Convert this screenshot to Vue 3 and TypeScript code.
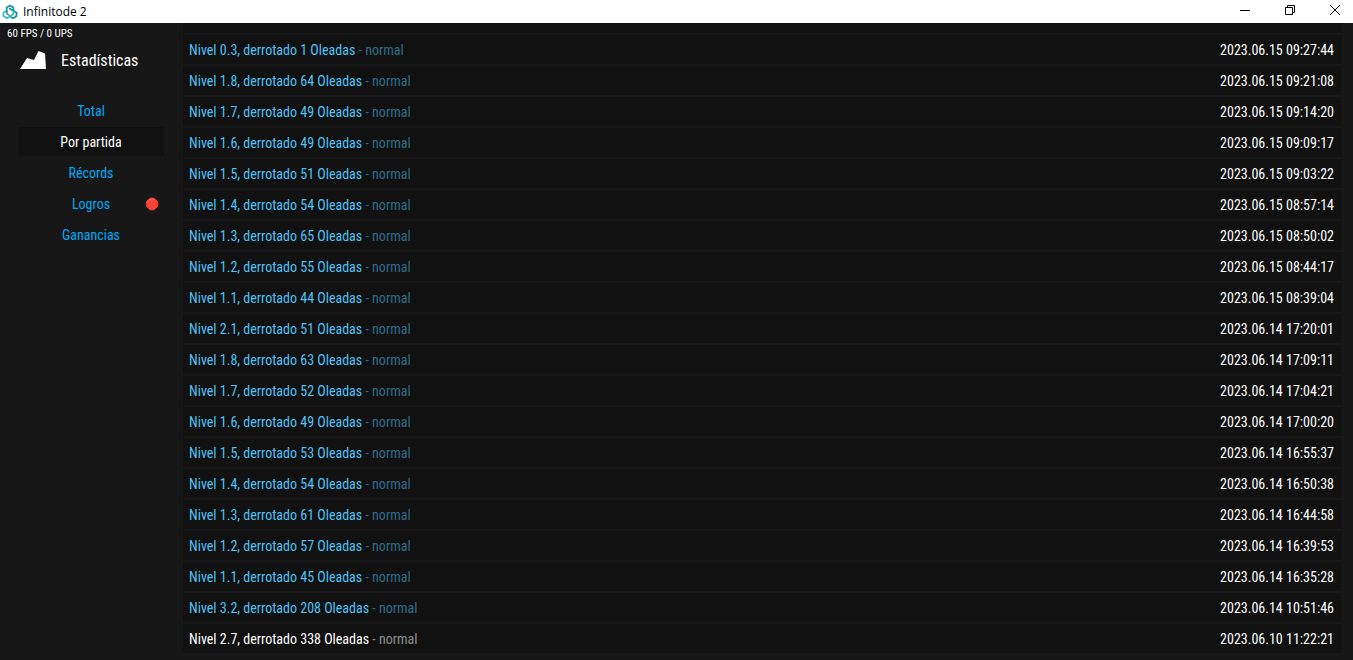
<script setup lang="ts">
interface Match {
  level: string
  waves: number
  date: string
  best?: boolean
}

const sections = [
  { name: 'Total' },
  { name: 'Por partida', active: true },
  { name: 'Récords' },
  { name: 'Logros', alert: true },
  { name: 'Ganancias' },
]

const matches: Match[] = [
  { level: '0.3', waves: 1, date: '2023.06.15 09:27:44' },
  { level: '1.8', waves: 64, date: '2023.06.15 09:21:08' },
  { level: '1.7', waves: 49, date: '2023.06.15 09:14:20' },
  { level: '1.6', waves: 49, date: '2023.06.15 09:09:17' },
  { level: '1.5', waves: 51, date: '2023.06.15 09:03:22' },
  { level: '1.4', waves: 54, date: '2023.06.15 08:57:14' },
  { level: '1.3', waves: 65, date: '2023.06.15 08:50:02' },
  { level: '1.2', waves: 55, date: '2023.06.15 08:44:17' },
  { level: '1.1', waves: 44, date: '2023.06.15 08:39:04' },
  { level: '2.1', waves: 51, date: '2023.06.14 17:20:01' },
  { level: '1.8', waves: 63, date: '2023.06.14 17:09:11' },
  { level: '1.7', waves: 52, date: '2023.06.14 17:04:21' },
  { level: '1.6', waves: 49, date: '2023.06.14 17:00:20' },
  { level: '1.5', waves: 53, date: '2023.06.14 16:55:37' },
  { level: '1.4', waves: 54, date: '2023.06.14 16:50:38' },
  { level: '1.3', waves: 61, date: '2023.06.14 16:44:58' },
  { level: '1.2', waves: 57, date: '2023.06.14 16:39:53' },
  { level: '1.1', waves: 45, date: '2023.06.14 16:35:28' },
  { level: '3.2', waves: 208, date: '2023.06.14 10:51:46' },
  { level: '2.7', waves: 338, date: '2023.06.10 11:22:21', best: true },
]
</script>

<template>
  <div class="window">
    <header class="titlebar">
      <svg class="logo" width="16" height="16" viewBox="0 0 16 16" fill="none" stroke-linecap="round" stroke-linejoin="round" aria-hidden="true">
        <path d="M4.800 7.500 L4.600 3.600 L8 1.500 L11.300 3.400 L11.500 6" stroke="#239cae" stroke-width="1.800" />
        <path d="M7.500 4.500 L11.500 6.800 L14.600 8.800 L14.400 12.200 L11 14.200 L8.800 13" stroke="#1a8ea3" stroke-width="1.800" />
        <path d="M3.800 7.200 L1.600 8.600 L1.400 12 L5 14.200 L8.200 12.300 L11.200 10.300 L11.200 8.500" stroke="#36bdca" stroke-width="1.800" />
        <path d="M4.800 7 L5 10 L7.200 11.300" stroke="#1d7287" stroke-width="1.200" />
      </svg>
      <span class="caption">Infinitode 2</span>
      <div class="controls">
        <button type="button" aria-label="Minimizar">
          <svg width="12" height="12" viewBox="0 0 12 12"><path d="M1 6.5H11" stroke="#000" fill="none" /></svg>
        </button>
        <button type="button" aria-label="Restaurar">
          <svg width="12" height="12" viewBox="0 0 12 12"><path d="M1.5 3.5H8.5V10.5H1.5ZM3.5 3.5V1.5H10.5V8.5H8.5" stroke="#000" fill="none" /></svg>
        </button>
        <button type="button" aria-label="Cerrar">
          <svg width="12" height="12" viewBox="0 0 12 12"><path d="M1 1L11 11M11 1L1 11" stroke="#000" fill="none" /></svg>
        </button>
      </div>
    </header>

    <div class="body">
      <aside class="sidebar">
        <div class="fps">60 FPS / 0 UPS</div>
        <div class="heading">
          <svg width="26" height="18" viewBox="0 0 26 18" aria-hidden="true">
            <path d="M0 18 L7 7 L14 9 L18.500 0 L25 2.500 L26 18 Z" fill="#fff" />
          </svg>
          <h1>Estadísticas</h1>
        </div>
        <nav>
          <button v-for="s in sections" :key="s.name" type="button" :class="{ active: s.active }">
            {{ s.name }}
            <svg v-if="s.alert" class="alert" width="14" height="14" viewBox="0 0 14 14" aria-hidden="true">
              <path d="M4.500 1.500 L7 1 L9.500 1.500 L12.500 4.500 L13 7 L12.500 9.500 L9.500 12.500 L7 13 L4.500 12.500 L1.500 9.500 L1 7 L1.500 4.500Z" fill="#f44336" stroke="#dc3c31" />
              <path d="M2 6 L5 2.500 L9 2" fill="none" stroke="#ff6659" />
            </svg>
          </button>
        </nav>
      </aside>

      <main>
        <ul>
          <li aria-hidden="true"></li>
          <li v-for="m in matches" :key="m.date" :class="{ best: m.best }">
            <span class="result">Nivel {{ m.level }}, derrotado {{ m.waves }} Oleadas <span class="mode">- normal</span></span>
            <time>{{ m.date }}</time>
          </li>
        </ul>
      </main>
    </div>
  </div>
</template>

<style>
body {
  margin: 0;
  background: #171717;
}
</style>

<style scoped>
.window {
  display: flex;
  flex-direction: column;
  height: 100vh;
  overflow: hidden;
  background: #171717;
  color: #fff;
  font-family: "Roboto Condensed", "Liberation Sans Narrow", Roboto, sans-serif;
  font-size: 14px;
}

button {
  padding: 0;
  border: 0;
  background: none;
  font: inherit;
}

.titlebar {
  display: flex;
  flex: none;
  align-items: center;
  height: 23px;
  padding-left: 2px;
  background: #fff;
  color: #000;
}

.caption {
  flex: 1;
  padding-left: 5px;
  font: 12px/22px "Open Sans", "Noto Sans", sans-serif;
}

.controls {
  display: flex;
  align-self: stretch;
  gap: 9px;
}

.controls button {
  display: flex;
  align-items: center;
  justify-content: center;
  width: 36px;
  padding-bottom: 3px;
}

.body {
  display: flex;
  flex: 1;
  min-height: 0;
}

.sidebar {
  flex: none;
  box-sizing: border-box;
  width: 183px;
  padding: 3px 19px 0 18px;
}

.fps {
  margin-left: -11px;
  font-size: 11px;
  line-height: 16px;
}

.heading {
  display: flex;
  align-items: center;
  gap: 15px;
  height: 36px;
  padding-left: 2px;
}

h1 {
  margin: 0;
  font-size: 16px;
  font-weight: 400;
}

nav {
  display: flex;
  flex-direction: column;
  gap: 2px;
  padding-top: 18px;
}

nav button {
  position: relative;
  height: 29px;
  color: #03a9f4;
}

nav .active {
  background: #111;
  color: #fff;
}

.alert {
  position: absolute;
  top: 8px;
  right: 5px;
}

main {
  display: flex;
  flex: 1;
  flex-direction: column;
  justify-content: flex-end;
  padding: 0 11px 7px 0;
  overflow: hidden;
}

ul {
  display: flex;
  flex-direction: column;
  gap: 2px;
  margin: 0;
  padding: 0;
  list-style: none;
}

li {
  display: flex;
  flex: none;
  align-items: center;
  justify-content: space-between;
  box-sizing: border-box;
  height: 29px;
  padding: 0 8px 0 6px;
  background: #111;
}

.result {
  color: #4fc3f7;
}

.mode {
  opacity: 0.5;
}

.best .result {
  color: #fff;
}
</style>
